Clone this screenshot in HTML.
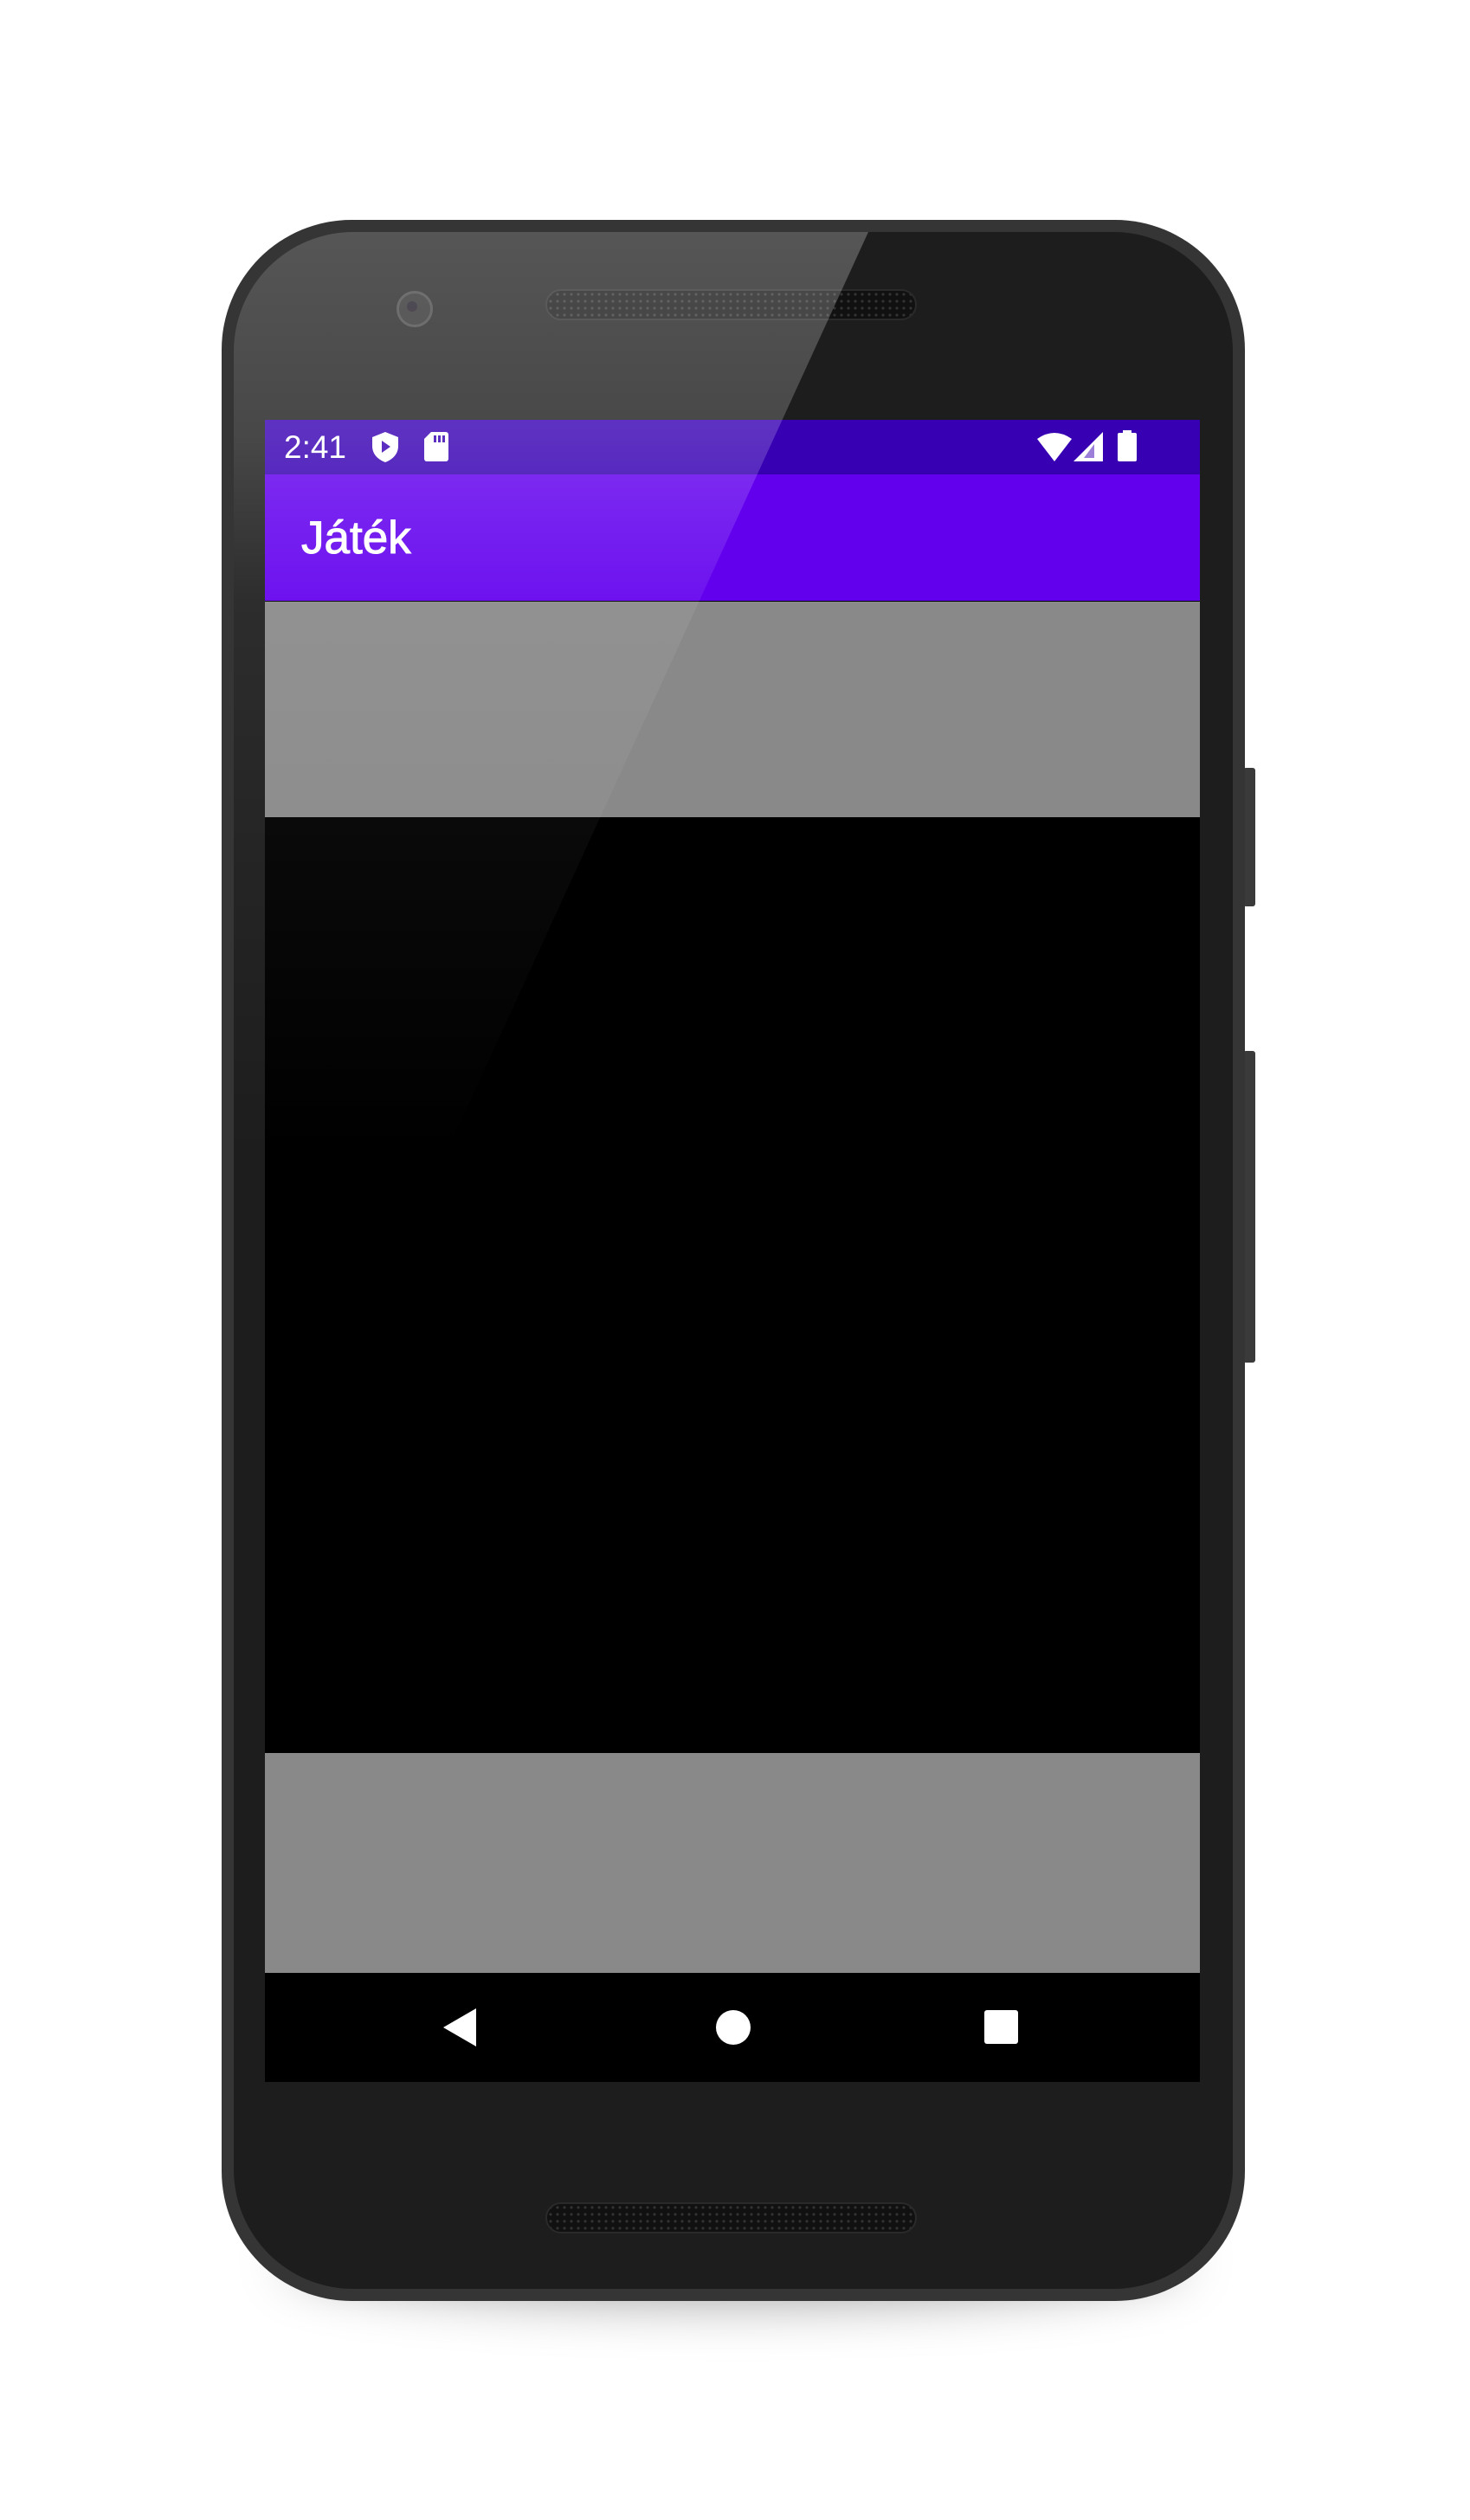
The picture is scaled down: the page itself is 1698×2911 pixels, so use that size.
<!DOCTYPE html>
<html><head><meta charset="utf-8">
<style>
html,body{margin:0;padding:0;background:#fff;}
body{width:1698px;height:2911px;position:relative;overflow:hidden;font-family:"Liberation Sans",sans-serif;}
.abs{position:absolute;}
#shadow{left:330px;top:2560px;width:1040px;height:100px;border-radius:50%;background:rgba(0,0,0,0.35);filter:blur(30px);}
#phone{left:256px;top:254px;width:1182px;height:2404px;border-radius:150px;background:#353535;}
#inner{left:270px;top:268px;width:1154px;height:2376px;border-radius:138px;background:#1d1d1d;}
#glarewrap{left:270px;top:268px;width:1154px;height:2376px;border-radius:138px;overflow:hidden;z-index:5;pointer-events:none;}
#glare{left:0;top:0;width:1154px;height:2376px;background:linear-gradient(to bottom,rgba(255,255,255,0.25),rgba(255,255,255,0.19) 10%,rgba(255,255,255,0.07) 18%,rgba(255,255,255,0.035) 30%,rgba(255,255,255,0) 45%);clip-path:polygon(0 0,733px 0,0 1600px);}
.btn{background:#3a3a3a;border-radius:3px;}
.spk{border-radius:20px;background:#111;border:2px solid #2a2a2a;background-image:radial-gradient(#333 1.5px,transparent 1.6px);background-size:8px 8px;}
#screen{left:306px;top:485px;width:1080px;height:1920px;background:#000;overflow:hidden;}
#status{left:0;top:0;width:1080px;height:63px;background:#3700b3;color:#fff;}
#appbar{left:0;top:63px;width:1080px;height:146px;background:#6200ee;box-shadow:0 3px 6px rgba(0,0,0,0.3);}
.gray{background:#898989;left:0;width:1080px;}
#nav{left:0;top:1794px;width:1080px;height:126px;background:#000;}
</style></head><body>
<div class="abs" id="shadow"></div>
<div class="abs btn" style="left:1436px;top:887px;width:14px;height:160px;"></div>
<div class="abs btn" style="left:1436px;top:1214px;width:14px;height:360px;"></div>
<div class="abs" id="phone"></div>
<div class="abs" id="inner"></div>
<div class="abs" style="left:458px;top:336px;width:36px;height:36px;border-radius:50%;background:#2a2a2a;border:3px solid #444;"></div>
<div class="abs" style="left:470px;top:348px;width:12px;height:12px;border-radius:50%;background:#1a1420;"></div>
<div class="abs spk" style="left:630px;top:334px;width:425px;height:32px;"></div>
<div class="abs spk" style="left:630px;top:2544px;width:425px;height:32px;"></div>
<div class="abs" id="screen">
  <div class="abs" id="status">
    <div class="abs" style="left:22px;top:12px;font-size:37px;line-height:40px;">2:41</div>
    <svg class="abs" style="left:124px;top:14px" width="30" height="35" viewBox="0 0 30 35"><path d="M15 0 L30 6 V16 C30 26 23 32 15 35 C7 32 0 26 0 16 V6 Z" fill="#fff"/><path d="M11 10 L21 17 L11 24 Z" fill="#3700b3"/></svg>
    <svg class="abs" style="left:184px;top:14px" width="28" height="34" viewBox="0 0 28 34"><path d="M8 0 H25 A3 3 0 0 1 28 3 V31 A3 3 0 0 1 25 34 H3 A3 3 0 0 1 0 31 V8 Z" fill="#fff"/><rect x="11" y="4" width="3" height="8" fill="#3700b3"/><rect x="16" y="4" width="3" height="8" fill="#3700b3"/><rect x="21" y="4" width="3" height="8" fill="#3700b3"/></svg>
    <svg class="abs" style="left:892px;top:14px" width="40" height="34" viewBox="0 0 40 34"><path d="M0 8 Q20 -6 40 8 L20 34 Z" fill="#fff"/></svg>
    <svg class="abs" style="left:934px;top:14px" width="34" height="34" viewBox="0 0 34 34"><path d="M34 0 V34 H0 Z" fill="#fff"/><path d="M24 14 V30 H12 Z" fill="#3700b3" opacity="0.5"/></svg>
    <svg class="abs" style="left:985px;top:12px" width="22" height="36" viewBox="0 0 22 36"><rect x="6" y="0" width="10" height="4" fill="#fff"/><rect x="0" y="3" width="22" height="33" rx="2" fill="#fff"/></svg>
  </div>
  <div class="abs" id="appbar">
    <div class="abs" style="left:42px;top:44px;font-size:53px;line-height:60px;color:#fff;-webkit-text-stroke:1px #fff;">Játék</div>
  </div>
  <div class="abs gray" style="top:210px;height:249px;"></div>
  <div class="abs gray" style="top:1540px;height:254px;"></div>
  <div class="abs" id="nav">
    <svg class="abs" style="left:206px;top:41px" width="38" height="44" viewBox="0 0 38 44"><path d="M38 0 V44 L0 22 Z" fill="#fff"/></svg>
    <div class="abs" style="left:521px;top:43px;width:40px;height:40px;border-radius:50%;background:#fff;"></div>
    <div class="abs" style="left:831px;top:43px;width:39px;height:39px;border-radius:3px;background:#fff;"></div>
  </div>
</div>
<div class="abs" id="glarewrap"><div class="abs" id="glare"></div></div>
</body></html>
